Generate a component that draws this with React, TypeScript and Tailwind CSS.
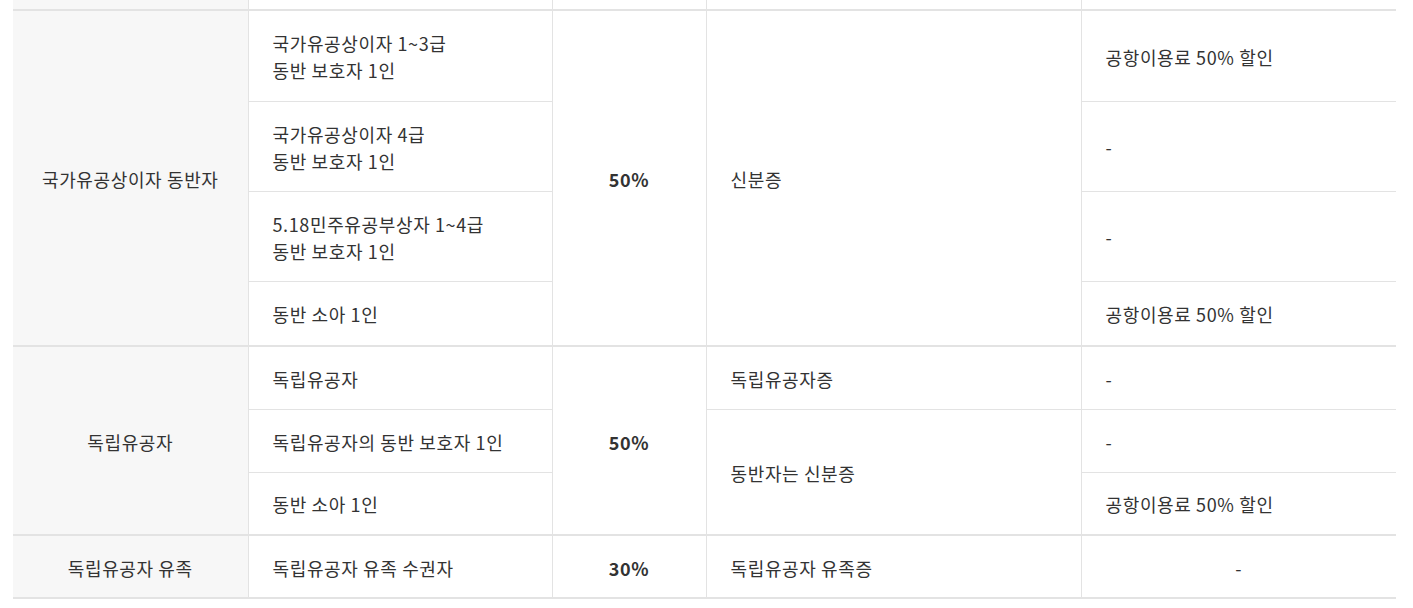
import React from "react";

const font = { fontFamily: '"Noto Sans CJK KR", "Noto Sans", sans-serif' };

const td = "border border-[#e3e3e3] px-6 pt-[3px] text-[18px] leading-[27px] tracking-[0.035em] text-[#333]";
const head = `${td} bg-[#f7f7f7] text-center`;
const rate = `${td} text-center font-bold text-[#222]`;

function Two({ a, b }: { a: string; b: string }) {
  return (
    <>
      {a}
      <br />
      {b}
    </>
  );
}

export default function App() {
  return (
    <div className="h-[608px] overflow-hidden bg-white px-[13px]" style={font}>
      <table className="w-[1383px] table-fixed border-collapse">
        <colgroup>
          <col className="w-[235px]" />
          <col className="w-[304px]" />
          <col className="w-[154px]" />
          <col className="w-[375px]" />
          <col className="w-[315px]" />
        </colgroup>
        <tbody>
          {/* cut-off row above */}
          <tr className="h-[10px] border-b-2 border-[#e3e3e3]">
            <td className="border-r border-[#e3e3e3] bg-[#f7f7f7]" />
            <td className="border-r border-[#e3e3e3]" />
            <td className="border-r border-[#e3e3e3]" />
            <td className="border-r border-[#e3e3e3]" />
            <td />
          </tr>

          {/* 국가유공상이자 동반자 */}
          <tr className="h-[91px] border-t-2 border-[#e3e3e3]">
            <td rowSpan={4} className={`${head} border-l-0`}>
              국가유공상이자 동반자
            </td>
            <td className={td}>
              <Two a="국가유공상이자 1~3급" b="동반 보호자 1인" />
            </td>
            <td rowSpan={4} className={rate}>
              50%
            </td>
            <td rowSpan={4} className={td}>
              신분증
            </td>
            <td className={`${td} border-r-0`}>공항이용료 50% 할인</td>
          </tr>
          <tr className="h-[90px]">
            <td className={td}>
              <Two a="국가유공상이자 4급" b="동반 보호자 1인" />
            </td>
            <td className={`${td} border-r-0`}>-</td>
          </tr>
          <tr className="h-[90px]">
            <td className={td}>
              <Two a="5.18민주유공부상자 1~4급" b="동반 보호자 1인" />
            </td>
            <td className={`${td} border-r-0`}>-</td>
          </tr>
          <tr className="h-[65px]">
            <td className={td}>동반 소아 1인</td>
            <td className={`${td} border-r-0`}>공항이용료 50% 할인</td>
          </tr>

          {/* 독립유공자 */}
          <tr className="h-[63px] border-t-2 border-[#e3e3e3]">
            <td rowSpan={3} className={`${head} border-l-0`}>
              독립유공자
            </td>
            <td className={td}>독립유공자</td>
            <td rowSpan={3} className={rate}>
              50%
            </td>
            <td className={td}>독립유공자증</td>
            <td className={`${td} border-r-0`}>-</td>
          </tr>
          <tr className="h-[63px]">
            <td className={td}>독립유공자의 동반 보호자 1인</td>
            <td rowSpan={2} className={td}>
              동반자는 신분증
            </td>
            <td className={`${td} border-r-0`}>-</td>
          </tr>
          <tr className="h-[63px]">
            <td className={td}>동반 소아 1인</td>
            <td className={`${td} border-r-0`}>공항이용료 50% 할인</td>
          </tr>

          {/* 독립유공자 유족 */}
          <tr className="h-[63px] border-y-2 border-[#e3e3e3]">
            <td className={`${head} border-l-0`}>독립유공자 유족</td>
            <td className={td}>독립유공자 유족 수권자</td>
            <td className={rate}>30%</td>
            <td className={td}>독립유공자 유족증</td>
            <td className={`${td} border-r-0 text-center`}>-</td>
          </tr>
        </tbody>
      </table>
    </div>
  );
}
